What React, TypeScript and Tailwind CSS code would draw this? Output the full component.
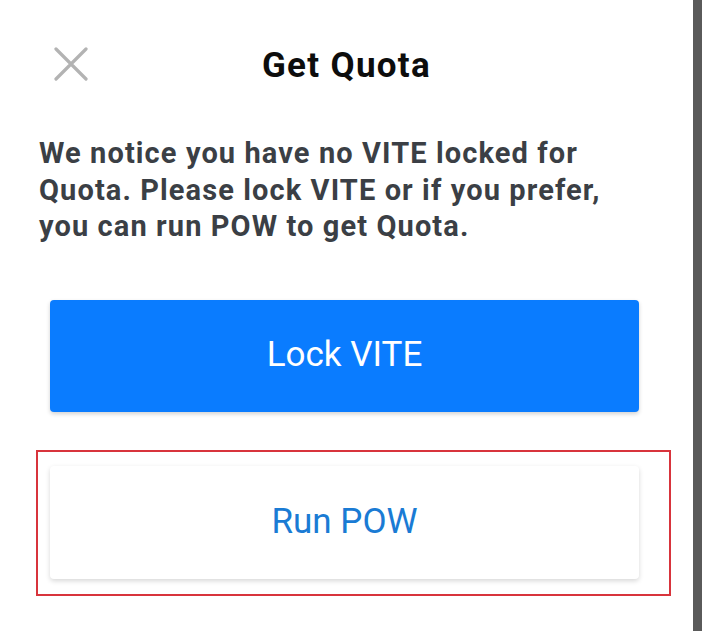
import React from "react";

export default function App() {
  return (
    <div className="flex h-[631px] w-[702px] overflow-hidden bg-white" style={{ fontFamily: "Roboto, 'Liberation Sans', sans-serif" }}>
      <div className="flex w-[693px] flex-col">
        <div className="relative mt-[47px] flex h-[34px] items-center justify-center">
          <button className="absolute left-[54px] top-0 h-[34px] w-[34px]" aria-label="close">
            <svg width="34" height="34" viewBox="0 0 34 34" fill="none">
              <path d="M2 2 L32 32 M32 2 L2 32" stroke="#b3b3b3" strokeWidth="3.2" strokeLinecap="round" />
            </svg>
          </button>
          <h1 className="mt-[2px] text-[35px] font-bold leading-[35px] tracking-[1.3px] text-[#0d0d0d]">Get Quota</h1>
        </div>
        <p className="mt-[54px] w-[612px] pl-[39px] text-[29px] font-bold leading-[36.5px] tracking-[1.1px] text-[#3b3f45]">
          We notice you have no VITE locked for Quota. Please lock VITE or if you prefer, you can run POW to get Quota.
        </p>
        <button className="ml-[50px] mt-[55px] flex h-[112px] w-[589px] items-center justify-center rounded-[4px] bg-[#0a7cff] text-[35px] text-white shadow-[0_2px_4px_rgba(0,0,0,0.18)]">
          Lock VITE
        </button>
        <div className="ml-[36px] mt-[38px] h-[146px] w-[635px] border-2 border-[#d8343c] pl-[12px] pt-[14px]">
          <button className="flex h-[113px] w-[589px] items-center justify-center rounded-[4px] bg-white text-[35px] text-[#1a7bd4] shadow-[0_2px_5px_rgba(0,0,0,0.16)]">
            Run POW
          </button>
        </div>
      </div>
      <div className="w-[9px] bg-[#5a5a5a]" />
    </div>
  );
}
